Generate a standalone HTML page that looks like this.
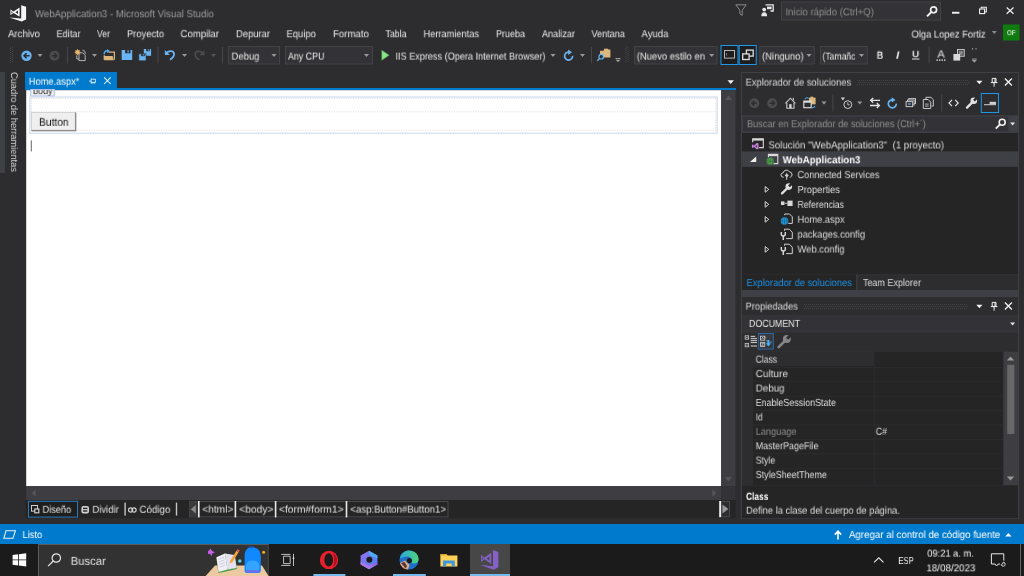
<!DOCTYPE html>
<html><head><meta charset="utf-8"><title>WebApplication3 - Microsoft Visual Studio</title>
<style>
html,body{margin:0;padding:0;background:#2d2d30;}
body{width:1024px;height:576px;overflow:hidden;position:relative;font-family:"Liberation Sans",sans-serif;}
#r{position:absolute;left:0;top:0;width:1024px;height:576px;overflow:hidden;}
#r>div,#r>svg,#r>span{position:absolute;display:block;}
#r>div{box-sizing:content-box;}
.t{white-space:pre;will-change:transform;text-rendering:geometricPrecision;transform-origin:0 50%;}
</style></head><body><div id="r">
<svg width="1024" height="576" viewBox="0 0 1024 576" style="left:0;top:0"><rect x="0" y="0" width="1024" height="576" fill="#2d2d30" /><g transform="translate(9.4 5.2)"><g transform="scale(1 1)" fill="#f6f6f6" fill-rule="evenodd"><path d="M11.8 0L16.7 1.6V14.2L12.2 16.2L0 12.2L11.8 13.4Z"/><path d="M1 4.2L4.2 6.2L10.2 2.2V11.6L4.2 7.7L1 9.8ZM8.6 5.2V8.8L6 7ZM2 5.8V8.2L3.4 7Z"/></g></g></svg>
<span class="t" style="left:35px;top:10px;font-size:10.3px;line-height:10.3px;color:#9a9a9a;transform:translate(0.00px,0.24px) rotate(0.01deg) scaleX(0.9379);">WebApplication3 - Microsoft Visual Studio</span>
<svg width="1024" height="576" viewBox="0 0 1024 576" style="left:0;top:0"><g transform="translate(735 4)"><path d="M0.8 0.8H11.2L7.2 6.2V11.4L4.8 9.8V6.2Z" fill="none" stroke="#8a8a8a" stroke-width="1"/></g><g transform="translate(761 4)"><path d="M4.5 0.8H12.2V7H9.5" fill="none" stroke="#e8e8e8" stroke-width="1.3"/><rect x="6" y="2.6" width="4.6" height="2.6" fill="#e8e8e8"/><circle cx="3.2" cy="5.6" r="1.9" fill="#e8e8e8"/><path d="M0.3 12.2C0.3 9.4 1.4 8.3 3.2 8.3S6.1 9.4 6.1 12.2Z" fill="#e8e8e8"/></g><rect x="781.5" y="2.1" width="159" height="18" fill="#333337" stroke="#434346" stroke-width="1" /></svg>
<span class="t" style="left:785px;top:8px;font-size:10.3px;line-height:10.3px;color:#8c8c8c;transform:translate(0.50px,0.34px) rotate(0.01deg) scaleX(0.9286);">Inicio rápido (Ctrl+Q)</span>
<svg width="1024" height="576" viewBox="0 0 1024 576" style="left:0;top:0"><g transform="translate(926 5.4)"><circle cx="7.6" cy="4.4" r="3" fill="none" stroke="#f1f1f1" stroke-width="1.7"/><path d="M5.4 6.6L1 11" stroke="#f1f1f1" stroke-width="2"/></g><rect x="952" y="11.8" width="7.4" height="1.9" fill="#f1f1f1" /><g transform="translate(979 6.6)"><path d="M2.2 2V0.6H7.3V5.4H5.8" fill="none" stroke="#f1f1f1" stroke-width="1.1"/><rect x="0.6" y="2.4" width="5" height="4.6" fill="none" stroke="#f1f1f1" stroke-width="1.1"/></g><g transform="translate(1006.2 7.2)"><path d="M0.5 0.3L7.3 6.6M7.3 0.3L0.5 6.6" stroke="#f1f1f1" stroke-width="1.2"/></g></svg>
<span class="t" style="left:8px;top:30px;font-size:10.3px;line-height:10.3px;color:#e6e6e6;transform:translate(0.00px,0.24px) rotate(0.01deg) scaleX(0.9317);">Archivo</span>
<span class="t" style="left:56px;top:30px;font-size:10.3px;line-height:10.3px;color:#e6e6e6;transform:translate(0.50px,0.24px) rotate(0.01deg) scaleX(0.8919);">Editar</span>
<span class="t" style="left:97px;top:30px;font-size:10.3px;line-height:10.3px;color:#e6e6e6;transform:translate(0.00px,0.24px) rotate(0.01deg) scaleX(0.8408);">Ver</span>
<span class="t" style="left:127px;top:30px;font-size:10.3px;line-height:10.3px;color:#e6e6e6;transform:translate(0.00px,0.24px) rotate(0.01deg) scaleX(0.9103);">Proyecto</span>
<span class="t" style="left:180px;top:30px;font-size:10.3px;line-height:10.3px;color:#e6e6e6;transform:translate(0.50px,0.24px) rotate(0.01deg) scaleX(0.9342);">Compilar</span>
<span class="t" style="left:236px;top:30px;font-size:10.3px;line-height:10.3px;color:#e6e6e6;transform:translate(0.00px,0.24px) rotate(0.01deg) scaleX(0.9136);">Depurar</span>
<span class="t" style="left:286px;top:30px;font-size:10.3px;line-height:10.3px;color:#e6e6e6;transform:translate(0.50px,0.24px) rotate(0.01deg) scaleX(0.9198);">Equipo</span>
<span class="t" style="left:333px;top:30px;font-size:10.3px;line-height:10.3px;color:#e6e6e6;transform:translate(0.00px,0.24px) rotate(0.01deg) scaleX(0.9387);">Formato</span>
<span class="t" style="left:385px;top:30px;font-size:10.3px;line-height:10.3px;color:#e6e6e6;transform:translate(0.50px,0.24px) rotate(0.01deg) scaleX(0.8528);">Tabla</span>
<span class="t" style="left:423px;top:30px;font-size:10.3px;line-height:10.3px;color:#e6e6e6;transform:translate(0.50px,0.24px) rotate(0.01deg) scaleX(0.8977);">Herramientas</span>
<span class="t" style="left:496px;top:30px;font-size:10.3px;line-height:10.3px;color:#e6e6e6;transform:translate(0.00px,0.24px) rotate(0.01deg) scaleX(0.8731);">Prueba</span>
<span class="t" style="left:542px;top:30px;font-size:10.3px;line-height:10.3px;color:#e6e6e6;transform:translate(0.00px,0.24px) rotate(0.01deg) scaleX(0.8868);">Analizar</span>
<span class="t" style="left:591px;top:30px;font-size:10.3px;line-height:10.3px;color:#e6e6e6;transform:translate(0.50px,0.24px) rotate(0.01deg) scaleX(0.8861);">Ventana</span>
<span class="t" style="left:641px;top:30px;font-size:10.3px;line-height:10.3px;color:#e6e6e6;transform:translate(0.50px,0.24px) rotate(0.01deg) scaleX(0.9304);">Ayuda</span>
<span class="t" style="left:911px;top:30px;font-size:10.3px;line-height:10.3px;color:#e6e6e6;transform:translate(0.50px,0.64px) rotate(0.01deg) scaleX(0.9127);">Olga Lopez Fortiz</span>
<svg width="1024" height="576" viewBox="0 0 1024 576" style="left:0;top:0"><g transform="translate(991.8 31.0)"><path d="M0 0H5L2.5 3Z" fill="#8a8a8a"/></g><rect x="1003" y="24.5" width="16.5" height="16" fill="#107c10" /></svg>
<span class="t" style="left:1007px;top:29px;font-size:7.3px;line-height:7.3px;color:#ffffff;transform:translate(0.00px,0.16px) rotate(0.01deg) scaleX(0.8484);">OF</span>
<svg width="1024" height="576" viewBox="0 0 1024 576" style="left:0;top:0"><g transform="translate(10 46)"><g fill="#46464a"><rect x="0" y="0.0" width="1" height="1"/><rect x="2" y="1.0" width="1" height="1"/><rect x="0" y="2.0" width="1" height="1"/><rect x="2" y="3.0" width="1" height="1"/><rect x="0" y="4.0" width="1" height="1"/><rect x="2" y="5.0" width="1" height="1"/><rect x="0" y="6.0" width="1" height="1"/><rect x="2" y="7.0" width="1" height="1"/><rect x="0" y="8.0" width="1" height="1"/><rect x="2" y="9.0" width="1" height="1"/><rect x="0" y="10.0" width="1" height="1"/><rect x="2" y="11.0" width="1" height="1"/><rect x="0" y="12.0" width="1" height="1"/><rect x="2" y="13.0" width="1" height="1"/><rect x="0" y="14.0" width="1" height="1"/><rect x="2" y="15.0" width="1" height="1"/><rect x="0" y="16.0" width="1" height="1"/></g></g><g transform="translate(21 50.2)"><circle cx="5.5" cy="5.5" r="5.2" fill="#69b4f0"/><path d="M8.6 5.5H3.2M5.6 2.9L3 5.5L5.6 8.1" stroke="#2d2d30" stroke-width="1.5" fill="none"/></g><g transform="translate(37.5 54.0)"><path d="M0 0H5L2.5 3Z" fill="#999"/></g><g transform="translate(49 50.2)"><circle cx="5.5" cy="5.5" r="5" fill="#4b4b4f"/><path d="M3 5.5H7.6M5.4 3.2L7.8 5.5L5.4 7.8" stroke="#2d2d30" stroke-width="1.5" fill="none"/></g><rect x="67" y="47" width="1" height="16.5" fill="#46464a" /><g transform="translate(74 48.4)"><path d="M5 4.4H8.6L11.2 7V12.2H5Z" fill="none" stroke="#b4b4b4" stroke-width="1"/><path d="M8.4 1.8C10.4 2.2 11.4 3.6 11.4 5.6" fill="none" stroke="#8a8a8a" stroke-width="1.3"/><path d="M2.8 7V10.6H5" fill="none" stroke="#b4b4b4" stroke-width="1"/><circle cx="3.6" cy="3.8" r="2.2" fill="#e8b36a"/><path d="M3.6 0.8V6.8M0.6 3.8H6.6M1.5 1.7L5.7 5.9M5.7 1.7L1.5 5.9" stroke="#e8b36a" stroke-width="0.9"/></g><g transform="translate(92.0 54.0)"><path d="M0 0H5L2.5 3Z" fill="#999"/></g><g transform="translate(103 49)"><path d="M5.6 3.2H11.4V10.8" fill="none" stroke="#dcb67a" stroke-width="1.2"/><path d="M0.8 7H9.6L10.8 11.2H1.2Z" fill="#dcb67a"/><path d="M1.2 11V6" stroke="#dcb67a" stroke-width="1"/><path d="M1.2 5.2C1 2.8 2.6 1.6 4.8 1.9" fill="none" stroke="#5aa9ee" stroke-width="1.5"/><path d="M4.2 0L7 2.3L4 4Z" fill="#5aa9ee"/></g><g transform="translate(121.7 50)"><path d="M0 0H10.5V10H0Z" fill="#6cb5f3"/><rect x="3.4" y="0" width="5.4" height="3.3" fill="#2d2d30"/><rect x="5.8" y="0.3" width="1.2" height="2.2" fill="#6cb5f3"/></g><g transform="translate(138.8 49)"><path d="M5 0H12.3V6.8H5Z" fill="#6cb5f3"/><rect x="7.4" y="0" width="3.6" height="2.2" fill="#2d2d30"/><rect x="9" y="0.3" width="0.9" height="1.4" fill="#6cb5f3"/><path d="M0 4.8H7.3V11.8H0Z" fill="#6cb5f3" stroke="#2d2d30" stroke-width="0.7"/><rect x="2.4" y="5" width="3.6" height="2.2" fill="#2d2d30"/><rect x="4" y="5.2" width="0.9" height="1.4" fill="#6cb5f3"/></g><rect x="157.5" y="47" width="1" height="16.5" fill="#46464a" /><g transform="translate(164.3 48.5)"><path d="M2.2 4.4C5 1.6 9.8 2.2 9.8 5.8C9.8 8 8 9.8 5.6 11.2" fill="none" stroke="#69b4f0" stroke-width="1.8"/><path d="M0.6 1.6V6.6H5.6Z" fill="#69b4f0"/></g><g transform="translate(182.0 54.0)"><path d="M0 0H5L2.5 3Z" fill="#999"/></g><g transform="translate(193 48.6)"><path d="M9.8 4.4C7 1.6 2.2 2.2 2.2 5.8C2.2 8 4 9.8 6.4 11.2" fill="none" stroke="#4d4d50" stroke-width="1.6"/><path d="M11.4 1.6V6.6H6.4Z" fill="#4d4d50"/></g><g transform="translate(211.0 54.0)"><path d="M0 0H5L2.5 3Z" fill="#555558"/></g><rect x="222" y="47" width="1" height="16.5" fill="#46464a" /><rect x="228.5" y="46.5" width="51" height="17.5" fill="#333337" stroke="#434346" stroke-width="1" /></svg>
<span class="t" style="left:231px;top:52px;font-size:10.3px;line-height:10.3px;color:#e6e6e6;transform:translate(0.50px,0.64px) rotate(0.01deg) scaleX(0.9225);">Debug</span>
<svg width="1024" height="576" viewBox="0 0 1024 576" style="left:0;top:0"><g transform="translate(271.5 54.0)"><path d="M0 0H5L2.5 3Z" fill="#999"/></g><rect x="285.5" y="46.5" width="87" height="17.5" fill="#333337" stroke="#434346" stroke-width="1" /></svg>
<span class="t" style="left:288px;top:52px;font-size:10.3px;line-height:10.3px;color:#e6e6e6;transform:translate(0.00px,0.64px) rotate(0.01deg) scaleX(0.8617);">Any CPU</span>
<svg width="1024" height="576" viewBox="0 0 1024 576" style="left:0;top:0"><g transform="translate(364.0 54.0)"><path d="M0 0H5L2.5 3Z" fill="#999"/></g><g transform="translate(381.5 50)"><path d="M0.3 0.3L7.6 5.2L0.3 10.2Z" fill="#8ae28a" stroke="#4cae4c" stroke-width="0.5"/></g></svg>
<span class="t" style="left:395px;top:52px;font-size:10.3px;line-height:10.3px;color:#e6e6e6;transform:translate(0.50px,0.64px) rotate(0.01deg) scaleX(0.8853);">IIS Express (Opera Internet Browser)</span>
<svg width="1024" height="576" viewBox="0 0 1024 576" style="left:0;top:0"><g transform="translate(550.5 54.0)"><path d="M0 0H5L2.5 3Z" fill="#999"/></g><g transform="translate(563 49.5)"><path d="M9.6 6.4A4 4 0 1 1 6.2 2.6" fill="none" stroke="#69b4f0" stroke-width="1.7"/><path d="M5.2 0L9 2.8L5.2 5.4Z" fill="#69b4f0"/></g><g transform="translate(580.0 54.0)"><path d="M0 0H5L2.5 3Z" fill="#999"/></g><rect x="591" y="47" width="1" height="16.5" fill="#46464a" /><g transform="translate(597 48.5)"><path d="M3 2.2H6.4L7.4 1H13.4V9H3Z" fill="#dcb67a"/><rect x="7" y="0.2" width="4" height="2" fill="#dcb67a"/><circle cx="4.2" cy="8.2" r="2.3" fill="#2d2d30" stroke="#69b4f0" stroke-width="1.2"/><path d="M2.6 9.8L0.4 12.4" stroke="#69b4f0" stroke-width="1.4"/></g><rect x="615.5" y="58" width="5" height="1" fill="#999" /><g transform="translate(615.5 59.7)"><path d="M0 0H5L2.5 2.6Z" fill="#999"/></g><g transform="translate(625.5 46)"><g fill="#46464a"><rect x="0" y="0" width="1" height="1"/><rect x="2" y="1" width="1" height="1"/><rect x="0" y="2" width="1" height="1"/><rect x="2" y="3" width="1" height="1"/><rect x="0" y="4" width="1" height="1"/><rect x="2" y="5" width="1" height="1"/><rect x="0" y="6" width="1" height="1"/><rect x="2" y="7" width="1" height="1"/><rect x="0" y="8" width="1" height="1"/><rect x="2" y="9" width="1" height="1"/><rect x="0" y="10" width="1" height="1"/><rect x="2" y="11" width="1" height="1"/><rect x="0" y="12" width="1" height="1"/><rect x="2" y="13" width="1" height="1"/><rect x="0" y="14" width="1" height="1"/><rect x="2" y="15" width="1" height="1"/><rect x="0" y="16" width="1" height="1"/></g></g><rect x="634.5" y="46.5" width="82.5" height="17.5" fill="#333337" stroke="#434346" stroke-width="1" /></svg>
<span class="t" style="left:636px;top:52px;font-size:10.3px;line-height:10.3px;color:#e6e6e6;transform:translate(0.80px,0.64px) rotate(0.01deg) scaleX(0.9163);">(Nuevo estilo en</span>
<svg width="1024" height="576" viewBox="0 0 1024 576" style="left:0;top:0"><g transform="translate(709.2 54.0)"><path d="M0 0H5L2.5 3Z" fill="#999"/></g><rect x="721.0" y="45.5" width="17" height="19" fill="#1e1e1f" stroke="#1c97ea" stroke-width="1" /><rect x="739.2" y="45.5" width="17" height="19" fill="#1e1e1f" stroke="#1c97ea" stroke-width="1" /><g transform="translate(724 50)"><rect x="0.5" y="0.5" width="10" height="7.6" fill="none" stroke="#b4b4b4" stroke-width="1"/><path d="M2.6 3V5.6" stroke="#8a8a8a" stroke-width="0.8"/></g><g transform="translate(742 49.5)"><rect x="4.4" y="0.6" width="6.8" height="6" fill="none" stroke="#e0e0e0" stroke-width="1.3"/><rect x="0.7" y="4.4" width="6.4" height="5.6" fill="#1e1e1f" stroke="#e0e0e0" stroke-width="1.3"/></g><rect x="759.8" y="46.5" width="54.40000000000009" height="17.5" fill="#333337" stroke="#434346" stroke-width="1" /></svg>
<span class="t" style="left:762px;top:52px;font-size:10.3px;line-height:10.3px;color:#e6e6e6;transform:translate(0.00px,0.64px) rotate(0.01deg) scaleX(0.9219);">(Ninguno)</span>
<svg width="1024" height="576" viewBox="0 0 1024 576" style="left:0;top:0"><g transform="translate(806.5 54.0)"><path d="M0 0H5L2.5 3Z" fill="#999"/></g><rect x="820.5" y="46.5" width="46.700000000000045" height="17.5" fill="#333337" stroke="#434346" stroke-width="1" /></svg>
<span class="t" style="left:822px;top:52px;font-size:10.3px;line-height:10.3px;color:#e6e6e6;transform:translate(0.50px,0.64px) rotate(0.01deg) scaleX(0.8355);">(Tamañc</span>
<svg width="1024" height="576" viewBox="0 0 1024 576" style="left:0;top:0"><g transform="translate(859.0 54.0)"><path d="M0 0H5L2.5 3Z" fill="#999"/></g></svg>
<span class="t" style="left:876px;top:51px;font-size:10.4px;line-height:10.4px;color:#e0e0e0;transform:translate(0.80px,0.74px) rotate(0.01deg) scaleX(0.8521);font-weight:bold;">B</span>
<span class="t" style="left:896px;top:51px;font-size:10.4px;line-height:10.4px;color:#e0e0e0;transform:translate(0.00px,0.74px) rotate(0.01deg) scaleX(1.1422);font-weight:bold;font-style:italic;">I</span>
<span class="t" style="left:912px;top:50px;font-size:9.2px;line-height:9.2px;color:#e0e0e0;transform:translate(0.20px,0.24px) rotate(0.01deg) scaleX(1.0536);font-weight:bold;">U</span>
<svg width="1024" height="576" viewBox="0 0 1024 576" style="left:0;top:0"><rect x="912" y="58.5" width="7.4" height="1" fill="#e0e0e0" /><rect x="928.5" y="46.5" width="1" height="17" fill="#46464a" /></svg>
<span class="t" style="left:937px;top:50px;font-size:10.4px;line-height:10.4px;color:#e0e0e0;transform:translate(0.40px,0.64px) rotate(0.01deg) scaleX(1.0667);">A</span>
<svg width="1024" height="576" viewBox="0 0 1024 576" style="left:0;top:0"><g transform="translate(936.5 59.4)"><rect x="0" y="0" width="1.4" height="1.4" fill="#e0e0e0"/><rect x="2.5" y="0" width="1.4" height="1.4" fill="#e0e0e0"/><rect x="5" y="0" width="1.4" height="1.4" fill="#e0e0e0"/><rect x="7.5" y="0" width="1.4" height="1.4" fill="#e0e0e0"/></g><g transform="translate(953 49)"><rect x="4.6" y="0.6" width="6.6" height="6.6" fill="#2d2d30" stroke="#c8c8c8" stroke-width="1.1"/><rect x="6" y="2" width="3.8" height="3.8" fill="#8a8a8a"/><rect x="0.4" y="5" width="6.8" height="6.6" fill="#d8d8d8"/></g><rect x="972" y="48" width="1" height="1.6" fill="#999" /><rect x="975.5" y="48" width="1" height="1.6" fill="#999" /><rect x="971.8" y="58.6" width="5" height="1" fill="#999" /><g transform="translate(971.8 60.1)"><path d="M0 0H5L2.5 2.6Z" fill="#999"/></g><rect x="0" y="72" width="5" height="101" fill="#3f3f46" /></svg>
<span class="t" style="left:17.6px;top:72.3px;font-size:9.8px;line-height:9.8px;color:#d0d0d0;transform-origin:0 0;transform:rotate(90deg) scaleX(0.9462);">Cuadro de herramientas</span>
<svg width="1024" height="576" viewBox="0 0 1024 576" style="left:0;top:0"><rect x="25" y="72" width="92" height="17" fill="#007acc" /><rect x="25" y="88" width="711" height="2.2" fill="#007acc" /></svg>
<span class="t" style="left:28px;top:77px;font-size:10.3px;line-height:10.3px;color:#ffffff;transform:translate(0.80px,0.74px) rotate(0.01deg) scaleX(0.9019);">Home.aspx*</span>
<svg width="1024" height="576" viewBox="0 0 1024 576" style="left:0;top:0"><g transform="translate(89 77.8)"><path d="M0 3.3H2.2M2.2 0.8V5.8M2.2 1.4H6.4V4.6H2.2M2.2 5.1H6.4" stroke="#e4f1fb" stroke-width="0.85" fill="none"/></g><g transform="translate(103.6 76.9)"><path d="M0.5 0.5L7.1 7.1M7.1 0.5L0.5 7.1" stroke="#eef6fc" stroke-width="1.05"/></g><g transform="translate(727.5 80.2)"><path d="M0 0H6.4L3.2 3.8Z" fill="#f1f1f1"/></g><rect x="26.2" y="90.2" width="695" height="396" fill="#ffffff" /><rect x="721.2" y="90.2" width="14.3" height="396" fill="#3e3e42" /><g transform="translate(725 95.6)"><path d="M0 4.4L3.5 0L7 4.4Z" fill="#56565a"/></g><g transform="translate(724.8 477)"><path d="M0 0L3.5 4.4L7 0Z" fill="#56565a"/></g><rect x="26.2" y="486.2" width="695" height="13.8" fill="#3e3e42" /><rect x="721.2" y="486.2" width="14.3" height="13.8" fill="#333337" /><g transform="translate(31.6 489.6)"><path d="M4 0L0 3.5L4 7Z" fill="#56565a"/></g><g transform="translate(712.4 489.6)"><path d="M0 0L4 3.5L0 7Z" fill="#56565a"/></g><rect x="30.7" y="89.5" width="23.6" height="6.5" fill="#f0f0f0" stroke="#a9c0ea" stroke-width="1" /></svg>
<div style="left:31px;top:90px;width:23px;height:6px;overflow:hidden;background:transparent"><span class="t" style="position:absolute;left:2.4px;top:-4px;transform-origin:0 0;font-size:9.8px;line-height:9.8px;color:#2a2a2a;transform:translate(0,1.1px) rotate(0.01deg) scaleX(0.92)">body</span></div>
<svg width="1024" height="576" viewBox="0 0 1024 576" style="left:0;top:0"><rect x="29.9" y="97.0" width="687.2" height="36.2" fill="none" stroke="#c8d6ee" stroke-width="1" /><g stroke="#d9d9d9" stroke-width="1" stroke-dasharray="1 1.4" fill="none"><path d="M31.5 98.4H716M31.5 111.8H716M31.5 130.2H716"/><path d="M31.6 98.4V130.2M715.8 98.4V130.2"/></g><rect x="31.5" y="112.5" width="44.8" height="18.8" fill="#737373" /><rect x="31.5" y="112.5" width="43.9" height="17.9" fill="#b9b9b9" /><rect x="31.5" y="112.5" width="43.3" height="17.3" fill="#efefef" /></svg>
<span class="t" style="left:39px;top:117px;font-size:11.2px;line-height:11.2px;color:#111111;transform:translate(0.00px,0.81px) rotate(0.01deg) scaleX(0.9172);">Button</span>
<svg width="1024" height="576" viewBox="0 0 1024 576" style="left:0;top:0"><rect x="30.8" y="140.4" width="0.9" height="11" fill="#555555" /><rect x="25.5" y="500" width="710" height="18.2" fill="#252526" /><rect x="28.5" y="501.3" width="49" height="15.8" fill="#1e1e1e" stroke="#2b78b8" stroke-width="1" /><g transform="translate(31 505)"><rect x="0.5" y="0.5" width="6" height="5.6" fill="none" stroke="#d0d0d0" stroke-width="1"/><rect x="3.2" y="3.4" width="5.2" height="5" fill="#d0d0d0"/><rect x="4.4" y="4.6" width="2.8" height="2.6" fill="#1e1e1e"/></g></svg>
<span class="t" style="left:42px;top:505px;font-size:10.3px;line-height:10.3px;color:#e0e0e0;transform:translate(0.50px,0.84px) rotate(0.01deg) scaleX(0.8982);">Diseño</span>
<svg width="1024" height="576" viewBox="0 0 1024 576" style="left:0;top:0"><g transform="translate(81 505.5)"><rect x="0.4" y="0.4" width="7.6" height="7.6" rx="2" fill="#d0d0d0"/><rect x="2" y="2.2" width="4.4" height="1.4" fill="#252526"/><rect x="2" y="4.8" width="4.4" height="1.4" fill="#252526"/></g></svg>
<span class="t" style="left:92px;top:505px;font-size:10.3px;line-height:10.3px;color:#e0e0e0;transform:translate(0.40px,0.84px) rotate(0.01deg) scaleX(0.9227);">Dividir</span>
<svg width="1024" height="576" viewBox="0 0 1024 576" style="left:0;top:0"><rect x="124.4" y="502.6" width="1.4" height="13" fill="#c4c4c4" /><g transform="translate(128 507)"><circle cx="2.6" cy="3" r="2.1" fill="none" stroke="#d0d0d0" stroke-width="1.2"/><circle cx="6" cy="3" r="2.1" fill="none" stroke="#d0d0d0" stroke-width="1.2"/></g></svg>
<span class="t" style="left:139px;top:505px;font-size:10.3px;line-height:10.3px;color:#e0e0e0;transform:translate(0.50px,0.84px) rotate(0.01deg) scaleX(0.9436);">Código</span>
<svg width="1024" height="576" viewBox="0 0 1024 576" style="left:0;top:0"><rect x="175.8" y="502.6" width="1.4" height="13" fill="#c4c4c4" /><rect x="189.5" y="501.5" width="258.5" height="15.399999999999999" fill="#252526" stroke="#4a4a4e" stroke-width="1" /><rect x="189.6" y="501.6" width="8.4" height="15.2" fill="#3a3a3d" /><g transform="translate(190.8 505)"><path d="M5 0L0 4.2L5 8.4Z" fill="#8a8a8a"/></g><rect x="198" y="501" width="1.6" height="16.4" fill="#e8e8e8" /><rect x="234.6" y="501" width="1.6" height="16.4" fill="#e8e8e8" /><rect x="274.8" y="501" width="1.6" height="16.4" fill="#e8e8e8" /><rect x="345.7" y="501" width="1.6" height="16.4" fill="#e8e8e8" /></svg>
<span class="t" style="left:202px;top:505px;font-size:10.3px;line-height:10.3px;color:#e0e0e0;transform:translate(0.40px,0.64px) rotate(0.01deg) scaleX(0.9813);">&lt;html&gt;</span>
<span class="t" style="left:239px;top:505px;font-size:10.3px;line-height:10.3px;color:#e0e0e0;transform:translate(0.30px,0.64px) rotate(0.01deg) scaleX(0.9952);">&lt;body&gt;</span>
<span class="t" style="left:279px;top:505px;font-size:10.3px;line-height:10.3px;color:#e0e0e0;transform:translate(0.00px,0.64px) rotate(0.01deg) scaleX(0.9971);">&lt;form#form1&gt;</span>
<span class="t" style="left:350px;top:505px;font-size:10.3px;line-height:10.3px;color:#e0e0e0;transform:translate(0.40px,0.64px) rotate(0.01deg) scaleX(0.9326);">&lt;asp:Button#Button1&gt;</span>
<svg width="1024" height="576" viewBox="0 0 1024 576" style="left:0;top:0"><rect x="719.2" y="501" width="1.8" height="16.2" fill="#f0f0f0" /><rect x="721.5" y="501.5" width="8" height="15.2" fill="#2d2d30" stroke="#4a4a4e" stroke-width="1" /><g transform="translate(722.4 504.6)"><path d="M0 0L6 4.5L0 9Z" fill="#9a9a9a"/></g><rect x="741" y="72" width="278" height="219" fill="#3f3f46" /><rect x="742" y="73" width="276" height="19.5" fill="#2d2d30" /></svg>
<span class="t" style="left:745px;top:78px;font-size:10.3px;line-height:10.3px;color:#d8d8d8;transform:translate(0.60px,0.64px) rotate(0.01deg) scaleX(0.9139);">Explorador de soluciones</span>
<svg width="1024" height="576" viewBox="0 0 1024 576" style="left:0;top:0"><g transform="translate(857 80.1)"><g fill="#45454a"><rect x="0" y="0" width="1" height="1"/><rect x="1" y="2" width="1" height="1"/><rect x="0" y="4" width="1" height="1"/><rect x="2" y="0" width="1" height="1"/><rect x="3" y="2" width="1" height="1"/><rect x="2" y="4" width="1" height="1"/><rect x="4" y="0" width="1" height="1"/><rect x="5" y="2" width="1" height="1"/><rect x="4" y="4" width="1" height="1"/><rect x="6" y="0" width="1" height="1"/><rect x="7" y="2" width="1" height="1"/><rect x="6" y="4" width="1" height="1"/><rect x="8" y="0" width="1" height="1"/><rect x="9" y="2" width="1" height="1"/><rect x="8" y="4" width="1" height="1"/><rect x="10" y="0" width="1" height="1"/><rect x="11" y="2" width="1" height="1"/><rect x="10" y="4" width="1" height="1"/><rect x="12" y="0" width="1" height="1"/><rect x="13" y="2" width="1" height="1"/><rect x="12" y="4" width="1" height="1"/><rect x="14" y="0" width="1" height="1"/><rect x="15" y="2" width="1" height="1"/><rect x="14" y="4" width="1" height="1"/><rect x="16" y="0" width="1" height="1"/><rect x="17" y="2" width="1" height="1"/><rect x="16" y="4" width="1" height="1"/><rect x="18" y="0" width="1" height="1"/><rect x="19" y="2" width="1" height="1"/><rect x="18" y="4" width="1" height="1"/><rect x="20" y="0" width="1" height="1"/><rect x="21" y="2" width="1" height="1"/><rect x="20" y="4" width="1" height="1"/><rect x="22" y="0" width="1" height="1"/><rect x="23" y="2" width="1" height="1"/><rect x="22" y="4" width="1" height="1"/><rect x="24" y="0" width="1" height="1"/><rect x="25" y="2" width="1" height="1"/><rect x="24" y="4" width="1" height="1"/><rect x="26" y="0" width="1" height="1"/><rect x="27" y="2" width="1" height="1"/><rect x="26" y="4" width="1" height="1"/><rect x="28" y="0" width="1" height="1"/><rect x="29" y="2" width="1" height="1"/><rect x="28" y="4" width="1" height="1"/><rect x="30" y="0" width="1" height="1"/><rect x="31" y="2" width="1" height="1"/><rect x="30" y="4" width="1" height="1"/><rect x="32" y="0" width="1" height="1"/><rect x="33" y="2" width="1" height="1"/><rect x="32" y="4" width="1" height="1"/><rect x="34" y="0" width="1" height="1"/><rect x="35" y="2" width="1" height="1"/><rect x="34" y="4" width="1" height="1"/><rect x="36" y="0" width="1" height="1"/><rect x="37" y="2" width="1" height="1"/><rect x="36" y="4" width="1" height="1"/><rect x="38" y="0" width="1" height="1"/><rect x="39" y="2" width="1" height="1"/><rect x="38" y="4" width="1" height="1"/><rect x="40" y="0" width="1" height="1"/><rect x="41" y="2" width="1" height="1"/><rect x="40" y="4" width="1" height="1"/><rect x="42" y="0" width="1" height="1"/><rect x="43" y="2" width="1" height="1"/><rect x="42" y="4" width="1" height="1"/><rect x="44" y="0" width="1" height="1"/><rect x="45" y="2" width="1" height="1"/><rect x="44" y="4" width="1" height="1"/><rect x="46" y="0" width="1" height="1"/><rect x="47" y="2" width="1" height="1"/><rect x="46" y="4" width="1" height="1"/><rect x="48" y="0" width="1" height="1"/><rect x="49" y="2" width="1" height="1"/><rect x="48" y="4" width="1" height="1"/><rect x="50" y="0" width="1" height="1"/><rect x="51" y="2" width="1" height="1"/><rect x="50" y="4" width="1" height="1"/><rect x="52" y="0" width="1" height="1"/><rect x="53" y="2" width="1" height="1"/><rect x="52" y="4" width="1" height="1"/><rect x="54" y="0" width="1" height="1"/><rect x="55" y="2" width="1" height="1"/><rect x="54" y="4" width="1" height="1"/><rect x="56" y="0" width="1" height="1"/><rect x="57" y="2" width="1" height="1"/><rect x="56" y="4" width="1" height="1"/><rect x="58" y="0" width="1" height="1"/><rect x="59" y="2" width="1" height="1"/><rect x="58" y="4" width="1" height="1"/><rect x="60" y="0" width="1" height="1"/><rect x="61" y="2" width="1" height="1"/><rect x="60" y="4" width="1" height="1"/><rect x="62" y="0" width="1" height="1"/><rect x="63" y="2" width="1" height="1"/><rect x="62" y="4" width="1" height="1"/><rect x="64" y="0" width="1" height="1"/><rect x="65" y="2" width="1" height="1"/><rect x="64" y="4" width="1" height="1"/><rect x="66" y="0" width="1" height="1"/><rect x="67" y="2" width="1" height="1"/><rect x="66" y="4" width="1" height="1"/><rect x="68" y="0" width="1" height="1"/><rect x="69" y="2" width="1" height="1"/><rect x="68" y="4" width="1" height="1"/><rect x="70" y="0" width="1" height="1"/><rect x="71" y="2" width="1" height="1"/><rect x="70" y="4" width="1" height="1"/><rect x="72" y="0" width="1" height="1"/><rect x="73" y="2" width="1" height="1"/><rect x="72" y="4" width="1" height="1"/><rect x="74" y="0" width="1" height="1"/><rect x="75" y="2" width="1" height="1"/><rect x="74" y="4" width="1" height="1"/><rect x="76" y="0" width="1" height="1"/><rect x="77" y="2" width="1" height="1"/><rect x="76" y="4" width="1" height="1"/><rect x="78" y="0" width="1" height="1"/><rect x="79" y="2" width="1" height="1"/><rect x="78" y="4" width="1" height="1"/><rect x="80" y="0" width="1" height="1"/><rect x="81" y="2" width="1" height="1"/><rect x="80" y="4" width="1" height="1"/><rect x="82" y="0" width="1" height="1"/><rect x="83" y="2" width="1" height="1"/><rect x="82" y="4" width="1" height="1"/><rect x="84" y="0" width="1" height="1"/><rect x="85" y="2" width="1" height="1"/><rect x="84" y="4" width="1" height="1"/><rect x="86" y="0" width="1" height="1"/><rect x="87" y="2" width="1" height="1"/><rect x="86" y="4" width="1" height="1"/><rect x="88" y="0" width="1" height="1"/><rect x="89" y="2" width="1" height="1"/><rect x="88" y="4" width="1" height="1"/><rect x="90" y="0" width="1" height="1"/><rect x="91" y="2" width="1" height="1"/><rect x="90" y="4" width="1" height="1"/><rect x="92" y="0" width="1" height="1"/><rect x="93" y="2" width="1" height="1"/><rect x="92" y="4" width="1" height="1"/><rect x="94" y="0" width="1" height="1"/><rect x="95" y="2" width="1" height="1"/><rect x="94" y="4" width="1" height="1"/><rect x="96" y="0" width="1" height="1"/><rect x="97" y="2" width="1" height="1"/><rect x="96" y="4" width="1" height="1"/><rect x="98" y="0" width="1" height="1"/><rect x="99" y="2" width="1" height="1"/><rect x="98" y="4" width="1" height="1"/><rect x="100" y="0" width="1" height="1"/><rect x="101" y="2" width="1" height="1"/><rect x="100" y="4" width="1" height="1"/><rect x="102" y="0" width="1" height="1"/><rect x="103" y="2" width="1" height="1"/><rect x="102" y="4" width="1" height="1"/><rect x="104" y="0" width="1" height="1"/><rect x="105" y="2" width="1" height="1"/><rect x="104" y="4" width="1" height="1"/><rect x="106" y="0" width="1" height="1"/><rect x="107" y="2" width="1" height="1"/><rect x="106" y="4" width="1" height="1"/><rect x="108" y="0" width="1" height="1"/><rect x="109" y="2" width="1" height="1"/><rect x="108" y="4" width="1" height="1"/><rect x="110" y="0" width="1" height="1"/><rect x="111" y="2" width="1" height="1"/><rect x="110" y="4" width="1" height="1"/></g></g><g transform="translate(976.3 80.8)"><path d="M0 0H6.2L3.1 3.4Z" fill="#f1f1f1"/></g><g transform="translate(990.6 77.8)"><path d="M1.6 0.6H5.4V4.6H1.6ZM0.2 4.8H6.8M3.5 4.8V8.8" stroke="#f1f1f1" stroke-width="1" fill="none"/><path d="M4.4 0.6V4.6" stroke="#f1f1f1" stroke-width="1"/></g><g transform="translate(1004.4 78)"><path d="M0.5 0.5L7.5 7.5M7.5 0.5L0.5 7.5" stroke="#f1f1f1" stroke-width="1.3"/></g><rect x="742" y="92" width="276" height="23.5" fill="#2d2d30" /><g transform="translate(748.7 97.7)"><circle cx="5.5" cy="5.5" r="5" fill="#4b4b4f"/><path d="M8 5.5H3.4M5.6 3.2L3.2 5.5L5.6 7.8" stroke="#2d2d30" stroke-width="1.5" fill="none"/></g><g transform="translate(766.7 97.7)"><circle cx="5.5" cy="5.5" r="5" fill="#4b4b4f"/><path d="M3 5.5H7.6M5.4 3.2L7.8 5.5L5.4 7.8" stroke="#2d2d30" stroke-width="1.5" fill="none"/></g><g transform="translate(784.6 96.8)"><path d="M0.8 6.6L5.8 1.4L10.8 6.6" fill="none" stroke="#c8c8c8" stroke-width="1.1"/><path d="M2.2 6V11.4H9.4V6" fill="none" stroke="#c8c8c8" stroke-width="1.1"/><rect x="4.6" y="7.4" width="2.4" height="4" fill="#d8d8d8"/><rect x="8.2" y="1" width="1.1" height="2.8" fill="#c8c8c8"/></g><g transform="translate(803 96.5)"><rect x="6" y="1.2" width="6.6" height="6.6" fill="#dcb67a"/><rect x="7.4" y="0.2" width="3" height="1.6" fill="#dcb67a"/><rect x="0.8" y="4.6" width="7.4" height="6.6" fill="#2d2d30" stroke="#e4e4e4" stroke-width="1.1"/><rect x="0.8" y="4.6" width="7.4" height="1.6" fill="#e4e4e4"/><path d="M2 2.6C3 1 4.6 1 5.6 2" stroke="#4aa3f0" stroke-width="1.1" fill="none"/><path d="M12 9.6C11 11.4 9.6 11.6 8.8 10.8" stroke="#4aa3f0" stroke-width="1.1" fill="none"/></g><g transform="translate(821.5 101.5)"><path d="M0 0H5L2.5 3Z" fill="#999"/></g><rect x="832.4" y="94.5" width="1" height="17" fill="#46464a" /><g transform="translate(840.6 97)"><path d="M0.2 0.6H4.4L2.3 3.4Z" fill="#d0d0d0"/><circle cx="7.2" cy="7.6" r="3.9" fill="none" stroke="#d0d0d0" stroke-width="1"/><path d="M7.2 5.4V7.8H9" stroke="#d0d0d0" stroke-width="0.9" fill="none"/></g><g transform="translate(857.3 101.5)"><path d="M0 0H5L2.5 3Z" fill="#999"/></g><g transform="translate(869 97.5)"><path d="M11 2.8H1.8M4.2 0.4L1.6 2.8L4.2 5.2" stroke="#e4e4e4" stroke-width="1.3" fill="none"/><path d="M1 8H10.2M7.8 5.6L10.4 8L7.8 10.4" stroke="#e4e4e4" stroke-width="1.3" fill="none"/></g><g transform="translate(886.5 97)"><path d="M9.8 6.6A4 4 0 1 1 6.2 2.8" fill="none" stroke="#69b4f0" stroke-width="1.7"/><path d="M5.2 0.2L9 3L5.2 5.6Z" fill="#69b4f0"/></g><g transform="translate(905.5 98)"><rect x="3.4" y="0.6" width="6.6" height="5" fill="#2d2d30" stroke="#c8c8c8" stroke-width="1"/><rect x="2" y="2" width="6.6" height="5" fill="#2d2d30" stroke="#c8c8c8" stroke-width="1"/><rect x="0.6" y="3.6" width="6.6" height="5" fill="#2d2d30" stroke="#c8c8c8" stroke-width="1"/><rect x="2.4" y="5.4" width="3" height="1.2" fill="#69b4f0"/></g><g transform="translate(922.5 96.5)"><path d="M3.4 3V0.8H8.4L10.8 3.2V9.6H9" fill="none" stroke="#c8c8c8" stroke-width="1"/><path d="M0.8 3H5.6L8.2 5.6V12H0.8Z" fill="none" stroke="#c8c8c8" stroke-width="1"/><path d="M2.6 7.6H6.2M2.6 9.6H6.2" stroke="#c8c8c8" stroke-width="0.9"/></g><rect x="941.2" y="94.5" width="1" height="17" fill="#46464a" /><g transform="translate(948.4 99.5)"><path d="M3.6 0.4L0.6 3.5L3.6 6.6M6.8 0.4L9.8 3.5L6.8 6.6" stroke="#e4e4e4" stroke-width="1.2" fill="none"/></g><g transform="translate(965.6 97)"><g transform="scale(1)"><path d="M1.4 10.6L6.6 5.4" stroke="#e4e4e4" stroke-width="2.3" stroke-linecap="round"/><circle cx="8.2" cy="3.8" r="3.3" fill="#e4e4e4"/><path d="M8.4 3.6L12.4 -0.4" stroke="#2d2d30" stroke-width="2.4"/></g></g><rect x="981.3" y="93.5" width="17.2" height="19" fill="#2d2d30" stroke="#1c97ea" stroke-width="1" /><rect x="984" y="104.2" width="12" height="1" fill="#d0d0d0" /><rect x="989.6" y="101.8" width="6.4" height="2.6" fill="#d0d0d0" /><rect x="742.5" y="116.0" width="275" height="16" fill="#333337" stroke="#3f3f46" stroke-width="1" /><rect x="1008.3" y="116.5" width="9.7" height="15" fill="#3f3f46" /></svg>
<span class="t" style="left:747px;top:120px;font-size:10.3px;line-height:10.3px;color:#8c8c8c;transform:translate(0.00px,0.24px) rotate(0.01deg) scaleX(0.8946);">Buscar en Explorador de soluciones (Ctrl+´)</span>
<svg width="1024" height="576" viewBox="0 0 1024 576" style="left:0;top:0"><g transform="translate(995 118)"><circle cx="7.2" cy="4.2" r="3" fill="none" stroke="#f1f1f1" stroke-width="1.6"/><path d="M5 6.4L0.8 10.6" stroke="#f1f1f1" stroke-width="1.9"/></g><g transform="translate(1010.1 122.5)"><path d="M0 0H5L2.5 3Z" fill="#e4e4e4"/></g><rect x="742" y="133" width="276" height="141.5" fill="#252526" /><rect x="742" y="151.4" width="276" height="15.5" fill="#3f3f46" /><g transform="translate(751.5 138)"><path d="M1.2 4.2V0.8H11.8V9.6H7.6" fill="none" stroke="#d8d8d8" stroke-width="1.1"/><rect x="1.2" y="0.8" width="10.6" height="1.8" fill="#d8d8d8"/><path d="M5.4 4.8L7 5.6V10.8L5.4 11.6L2.6 9L1.2 10L0.4 9.6V6.8L1.2 6.4L2.6 7.4Z M5.3 7L3.8 8.2L5.3 9.4Z" fill="#c27fd8" fill-rule="evenodd"/></g></svg>
<span class="t" style="left:768px;top:141px;font-size:10.3px;line-height:10.3px;color:#dcdcdc;transform:translate(0.50px,0.44px) rotate(0.01deg) scaleX(0.9361);">Solución "WebApplication3"  (1 proyecto)</span>
<svg width="1024" height="576" viewBox="0 0 1024 576" style="left:0;top:0"><g transform="translate(750 156.4)"><path d="M6.2 0V5.6H0Z" fill="#f1f1f1"/></g><g transform="translate(766 153.6)"><path d="M2.4 4V0.8H11.8V10H7" fill="none" stroke="#d8d8d8" stroke-width="1.1"/><rect x="2.4" y="0.8" width="9.4" height="1.8" fill="#d8d8d8"/><circle cx="4.2" cy="7.6" r="3.9" fill="#56a356" stroke="#3f3f46" stroke-width="0.5"/><path d="M0.6 7.6H7.8M4.2 3.9V11.3M2.4 4.6C1.6 6.4 1.6 8.8 2.4 10.6M6 4.6C6.8 6.4 6.8 8.8 6 10.6" stroke="#2c6a2c" stroke-width="0.6" fill="none"/></g></svg>
<span class="t" style="left:782px;top:156px;font-size:10.3px;line-height:10.3px;color:#ffffff;transform:translate(0.70px,0.31px) rotate(0.01deg) scaleX(0.9333);font-weight:bold;">WebApplication3</span>
<svg width="1024" height="576" viewBox="0 0 1024 576" style="left:0;top:0"><g transform="translate(780.5 169)"><path d="M3.2 8.2H2.6A2.2 2.2 0 0 1 2.8 3.8A3.2 3.2 0 0 1 8.8 2.8A2.8 2.8 0 0 1 9.8 8.2H9.2" fill="none" stroke="#d0d0d0" stroke-width="1"/><path d="M6.2 4.2V10.8M4.6 6H7.8L6.2 8Z" stroke="#d0d0d0" stroke-width="1" fill="#d0d0d0"/></g></svg>
<span class="t" style="left:797px;top:171px;font-size:10.3px;line-height:10.3px;color:#dcdcdc;transform:translate(0.50px,0.18px) rotate(0.01deg) scaleX(0.8896);">Connected Services</span>
<svg width="1024" height="576" viewBox="0 0 1024 576" style="left:0;top:0"><g transform="translate(764.6 185.8)"><path d="M0.6 0.8L4.2 3.6L0.6 6.4Z" fill="none" stroke="#d8d8d8" stroke-width="1"/></g><g transform="translate(780.6 182.8)"><g transform="scale(1)"><path d="M1.4 10.6L6.6 5.4" stroke="#e0e0e0" stroke-width="2.3" stroke-linecap="round"/><circle cx="8.2" cy="3.8" r="3.3" fill="#e0e0e0"/><path d="M8.4 3.6L12.4 -0.4" stroke="#252526" stroke-width="2.4"/></g></g></svg>
<span class="t" style="left:797px;top:186px;font-size:10.3px;line-height:10.3px;color:#dcdcdc;transform:translate(0.50px,0.05px) rotate(0.01deg) scaleX(0.9053);">Properties</span>
<svg width="1024" height="576" viewBox="0 0 1024 576" style="left:0;top:0"><g transform="translate(764.6 200.8)"><path d="M0.6 0.8L4.2 3.6L0.6 6.4Z" fill="none" stroke="#d8d8d8" stroke-width="1"/></g><g transform="translate(781 200.6)"><rect x="0" y="0.8" width="3.4" height="3.6" fill="#d8d8d8"/><rect x="3.4" y="2.2" width="3" height="0.9" fill="#d8d8d8"/><rect x="6.4" y="0" width="5.2" height="5.4" fill="#d8d8d8"/></g></svg>
<span class="t" style="left:797px;top:200px;font-size:10.3px;line-height:10.3px;color:#dcdcdc;transform:translate(0.50px,0.92px) rotate(0.01deg) scaleX(0.8460);">Referencias</span>
<svg width="1024" height="576" viewBox="0 0 1024 576" style="left:0;top:0"><g transform="translate(764.6 215.8)"><path d="M0.6 0.8L4.2 3.6L0.6 6.4Z" fill="none" stroke="#d8d8d8" stroke-width="1"/></g><g transform="translate(780.5 213.4)"><path d="M4.2 1.8V0.6H9L11.8 3.4V10H7.8" fill="none" stroke="#d0d0d0" stroke-width="1"/><circle cx="4" cy="7.6" r="3.8" fill="#2d97d3"/><path d="M0.2 7.6H7.8M4 3.8V11.4M2.2 4.6C1.4 6.4 1.4 8.8 2.2 10.6M5.8 4.6C6.6 6.4 6.6 8.8 5.8 10.6" stroke="#0f5e8c" stroke-width="0.6" fill="none"/></g></svg>
<span class="t" style="left:797px;top:215px;font-size:10.3px;line-height:10.3px;color:#dcdcdc;transform:translate(0.50px,0.79px) rotate(0.01deg) scaleX(0.9041);">Home.aspx</span>
<svg width="1024" height="576" viewBox="0 0 1024 576" style="left:0;top:0"><g transform="translate(780.5 228.4)"><path d="M4 2.4V0.8H8.8L11.8 3.8V10.2H5.6" fill="none" stroke="#d0d0d0" stroke-width="1"/><path d="M2.8 11.6V7.4" stroke="#d8d8d8" stroke-width="1.5"/><path d="M0.8 3.6V5.6A2 2 0 0 0 4.8 5.6V3.6" fill="none" stroke="#d8d8d8" stroke-width="1.4"/></g></svg>
<span class="t" style="left:797px;top:230px;font-size:10.3px;line-height:10.3px;color:#dcdcdc;transform:translate(0.50px,0.66px) rotate(0.01deg) scaleX(0.9081);">packages.config</span>
<svg width="1024" height="576" viewBox="0 0 1024 576" style="left:0;top:0"><g transform="translate(764.6 245.8)"><path d="M0.6 0.8L4.2 3.6L0.6 6.4Z" fill="none" stroke="#d8d8d8" stroke-width="1"/></g><g transform="translate(780.5 243.4)"><path d="M4 2.4V0.8H8.8L11.8 3.8V10.2H5.6" fill="none" stroke="#d0d0d0" stroke-width="1"/><path d="M2.8 11.6V7.4" stroke="#d8d8d8" stroke-width="1.5"/><path d="M0.8 3.6V5.6A2 2 0 0 0 4.8 5.6V3.6" fill="none" stroke="#d8d8d8" stroke-width="1.4"/></g></svg>
<span class="t" style="left:797px;top:245px;font-size:10.3px;line-height:10.3px;color:#dcdcdc;transform:translate(0.50px,0.53px) rotate(0.01deg) scaleX(0.9174);">Web.config</span>
<svg width="1024" height="576" viewBox="0 0 1024 576" style="left:0;top:0"><rect x="742" y="274.5" width="114" height="15.5" fill="#252526" /></svg>
<span class="t" style="left:746px;top:279px;font-size:10.3px;line-height:10.3px;color:#1a8fe3;transform:translate(0.50px,0.04px) rotate(0.01deg) scaleX(0.9121);">Explorador de soluciones</span>
<svg width="1024" height="576" viewBox="0 0 1024 576" style="left:0;top:0"><rect x="856.3" y="274.5" width="161.7" height="15.5" fill="#2d2d30" /><rect x="856.3" y="274.5" width="1" height="15.5" fill="#3f3f46" /></svg>
<span class="t" style="left:863px;top:279px;font-size:10.3px;line-height:10.3px;color:#d8d8d8;transform:translate(0.00px,0.04px) rotate(0.01deg) scaleX(0.8734);">Team Explorer</span>
<svg width="1024" height="576" viewBox="0 0 1024 576" style="left:0;top:0"><rect x="741" y="290" width="278" height="7" fill="#3f3f46" /><rect x="741" y="297" width="278" height="222" fill="#3f3f46" /><rect x="742" y="297" width="276" height="18.5" fill="#2d2d30" /></svg>
<span class="t" style="left:745px;top:302px;font-size:10.3px;line-height:10.3px;color:#d8d8d8;transform:translate(0.60px,0.64px) rotate(0.01deg) scaleX(0.9042);">Propiedades</span>
<svg width="1024" height="576" viewBox="0 0 1024 576" style="left:0;top:0"><g transform="translate(804 304.1)"><g fill="#45454a"><rect x="0" y="0" width="1" height="1"/><rect x="1" y="2" width="1" height="1"/><rect x="0" y="4" width="1" height="1"/><rect x="2" y="0" width="1" height="1"/><rect x="3" y="2" width="1" height="1"/><rect x="2" y="4" width="1" height="1"/><rect x="4" y="0" width="1" height="1"/><rect x="5" y="2" width="1" height="1"/><rect x="4" y="4" width="1" height="1"/><rect x="6" y="0" width="1" height="1"/><rect x="7" y="2" width="1" height="1"/><rect x="6" y="4" width="1" height="1"/><rect x="8" y="0" width="1" height="1"/><rect x="9" y="2" width="1" height="1"/><rect x="8" y="4" width="1" height="1"/><rect x="10" y="0" width="1" height="1"/><rect x="11" y="2" width="1" height="1"/><rect x="10" y="4" width="1" height="1"/><rect x="12" y="0" width="1" height="1"/><rect x="13" y="2" width="1" height="1"/><rect x="12" y="4" width="1" height="1"/><rect x="14" y="0" width="1" height="1"/><rect x="15" y="2" width="1" height="1"/><rect x="14" y="4" width="1" height="1"/><rect x="16" y="0" width="1" height="1"/><rect x="17" y="2" width="1" height="1"/><rect x="16" y="4" width="1" height="1"/><rect x="18" y="0" width="1" height="1"/><rect x="19" y="2" width="1" height="1"/><rect x="18" y="4" width="1" height="1"/><rect x="20" y="0" width="1" height="1"/><rect x="21" y="2" width="1" height="1"/><rect x="20" y="4" width="1" height="1"/><rect x="22" y="0" width="1" height="1"/><rect x="23" y="2" width="1" height="1"/><rect x="22" y="4" width="1" height="1"/><rect x="24" y="0" width="1" height="1"/><rect x="25" y="2" width="1" height="1"/><rect x="24" y="4" width="1" height="1"/><rect x="26" y="0" width="1" height="1"/><rect x="27" y="2" width="1" height="1"/><rect x="26" y="4" width="1" height="1"/><rect x="28" y="0" width="1" height="1"/><rect x="29" y="2" width="1" height="1"/><rect x="28" y="4" width="1" height="1"/><rect x="30" y="0" width="1" height="1"/><rect x="31" y="2" width="1" height="1"/><rect x="30" y="4" width="1" height="1"/><rect x="32" y="0" width="1" height="1"/><rect x="33" y="2" width="1" height="1"/><rect x="32" y="4" width="1" height="1"/><rect x="34" y="0" width="1" height="1"/><rect x="35" y="2" width="1" height="1"/><rect x="34" y="4" width="1" height="1"/><rect x="36" y="0" width="1" height="1"/><rect x="37" y="2" width="1" height="1"/><rect x="36" y="4" width="1" height="1"/><rect x="38" y="0" width="1" height="1"/><rect x="39" y="2" width="1" height="1"/><rect x="38" y="4" width="1" height="1"/><rect x="40" y="0" width="1" height="1"/><rect x="41" y="2" width="1" height="1"/><rect x="40" y="4" width="1" height="1"/><rect x="42" y="0" width="1" height="1"/><rect x="43" y="2" width="1" height="1"/><rect x="42" y="4" width="1" height="1"/><rect x="44" y="0" width="1" height="1"/><rect x="45" y="2" width="1" height="1"/><rect x="44" y="4" width="1" height="1"/><rect x="46" y="0" width="1" height="1"/><rect x="47" y="2" width="1" height="1"/><rect x="46" y="4" width="1" height="1"/><rect x="48" y="0" width="1" height="1"/><rect x="49" y="2" width="1" height="1"/><rect x="48" y="4" width="1" height="1"/><rect x="50" y="0" width="1" height="1"/><rect x="51" y="2" width="1" height="1"/><rect x="50" y="4" width="1" height="1"/><rect x="52" y="0" width="1" height="1"/><rect x="53" y="2" width="1" height="1"/><rect x="52" y="4" width="1" height="1"/><rect x="54" y="0" width="1" height="1"/><rect x="55" y="2" width="1" height="1"/><rect x="54" y="4" width="1" height="1"/><rect x="56" y="0" width="1" height="1"/><rect x="57" y="2" width="1" height="1"/><rect x="56" y="4" width="1" height="1"/><rect x="58" y="0" width="1" height="1"/><rect x="59" y="2" width="1" height="1"/><rect x="58" y="4" width="1" height="1"/><rect x="60" y="0" width="1" height="1"/><rect x="61" y="2" width="1" height="1"/><rect x="60" y="4" width="1" height="1"/><rect x="62" y="0" width="1" height="1"/><rect x="63" y="2" width="1" height="1"/><rect x="62" y="4" width="1" height="1"/><rect x="64" y="0" width="1" height="1"/><rect x="65" y="2" width="1" height="1"/><rect x="64" y="4" width="1" height="1"/><rect x="66" y="0" width="1" height="1"/><rect x="67" y="2" width="1" height="1"/><rect x="66" y="4" width="1" height="1"/><rect x="68" y="0" width="1" height="1"/><rect x="69" y="2" width="1" height="1"/><rect x="68" y="4" width="1" height="1"/><rect x="70" y="0" width="1" height="1"/><rect x="71" y="2" width="1" height="1"/><rect x="70" y="4" width="1" height="1"/><rect x="72" y="0" width="1" height="1"/><rect x="73" y="2" width="1" height="1"/><rect x="72" y="4" width="1" height="1"/><rect x="74" y="0" width="1" height="1"/><rect x="75" y="2" width="1" height="1"/><rect x="74" y="4" width="1" height="1"/><rect x="76" y="0" width="1" height="1"/><rect x="77" y="2" width="1" height="1"/><rect x="76" y="4" width="1" height="1"/><rect x="78" y="0" width="1" height="1"/><rect x="79" y="2" width="1" height="1"/><rect x="78" y="4" width="1" height="1"/><rect x="80" y="0" width="1" height="1"/><rect x="81" y="2" width="1" height="1"/><rect x="80" y="4" width="1" height="1"/><rect x="82" y="0" width="1" height="1"/><rect x="83" y="2" width="1" height="1"/><rect x="82" y="4" width="1" height="1"/><rect x="84" y="0" width="1" height="1"/><rect x="85" y="2" width="1" height="1"/><rect x="84" y="4" width="1" height="1"/><rect x="86" y="0" width="1" height="1"/><rect x="87" y="2" width="1" height="1"/><rect x="86" y="4" width="1" height="1"/><rect x="88" y="0" width="1" height="1"/><rect x="89" y="2" width="1" height="1"/><rect x="88" y="4" width="1" height="1"/><rect x="90" y="0" width="1" height="1"/><rect x="91" y="2" width="1" height="1"/><rect x="90" y="4" width="1" height="1"/><rect x="92" y="0" width="1" height="1"/><rect x="93" y="2" width="1" height="1"/><rect x="92" y="4" width="1" height="1"/><rect x="94" y="0" width="1" height="1"/><rect x="95" y="2" width="1" height="1"/><rect x="94" y="4" width="1" height="1"/><rect x="96" y="0" width="1" height="1"/><rect x="97" y="2" width="1" height="1"/><rect x="96" y="4" width="1" height="1"/><rect x="98" y="0" width="1" height="1"/><rect x="99" y="2" width="1" height="1"/><rect x="98" y="4" width="1" height="1"/><rect x="100" y="0" width="1" height="1"/><rect x="101" y="2" width="1" height="1"/><rect x="100" y="4" width="1" height="1"/><rect x="102" y="0" width="1" height="1"/><rect x="103" y="2" width="1" height="1"/><rect x="102" y="4" width="1" height="1"/><rect x="104" y="0" width="1" height="1"/><rect x="105" y="2" width="1" height="1"/><rect x="104" y="4" width="1" height="1"/><rect x="106" y="0" width="1" height="1"/><rect x="107" y="2" width="1" height="1"/><rect x="106" y="4" width="1" height="1"/><rect x="108" y="0" width="1" height="1"/><rect x="109" y="2" width="1" height="1"/><rect x="108" y="4" width="1" height="1"/><rect x="110" y="0" width="1" height="1"/><rect x="111" y="2" width="1" height="1"/><rect x="110" y="4" width="1" height="1"/><rect x="112" y="0" width="1" height="1"/><rect x="113" y="2" width="1" height="1"/><rect x="112" y="4" width="1" height="1"/><rect x="114" y="0" width="1" height="1"/><rect x="115" y="2" width="1" height="1"/><rect x="114" y="4" width="1" height="1"/><rect x="116" y="0" width="1" height="1"/><rect x="117" y="2" width="1" height="1"/><rect x="116" y="4" width="1" height="1"/><rect x="118" y="0" width="1" height="1"/><rect x="119" y="2" width="1" height="1"/><rect x="118" y="4" width="1" height="1"/><rect x="120" y="0" width="1" height="1"/><rect x="121" y="2" width="1" height="1"/><rect x="120" y="4" width="1" height="1"/><rect x="122" y="0" width="1" height="1"/><rect x="123" y="2" width="1" height="1"/><rect x="122" y="4" width="1" height="1"/><rect x="124" y="0" width="1" height="1"/><rect x="125" y="2" width="1" height="1"/><rect x="124" y="4" width="1" height="1"/><rect x="126" y="0" width="1" height="1"/><rect x="127" y="2" width="1" height="1"/><rect x="126" y="4" width="1" height="1"/><rect x="128" y="0" width="1" height="1"/><rect x="129" y="2" width="1" height="1"/><rect x="128" y="4" width="1" height="1"/><rect x="130" y="0" width="1" height="1"/><rect x="131" y="2" width="1" height="1"/><rect x="130" y="4" width="1" height="1"/><rect x="132" y="0" width="1" height="1"/><rect x="133" y="2" width="1" height="1"/><rect x="132" y="4" width="1" height="1"/><rect x="134" y="0" width="1" height="1"/><rect x="135" y="2" width="1" height="1"/><rect x="134" y="4" width="1" height="1"/><rect x="136" y="0" width="1" height="1"/><rect x="137" y="2" width="1" height="1"/><rect x="136" y="4" width="1" height="1"/><rect x="138" y="0" width="1" height="1"/><rect x="139" y="2" width="1" height="1"/><rect x="138" y="4" width="1" height="1"/><rect x="140" y="0" width="1" height="1"/><rect x="141" y="2" width="1" height="1"/><rect x="140" y="4" width="1" height="1"/><rect x="142" y="0" width="1" height="1"/><rect x="143" y="2" width="1" height="1"/><rect x="142" y="4" width="1" height="1"/><rect x="144" y="0" width="1" height="1"/><rect x="145" y="2" width="1" height="1"/><rect x="144" y="4" width="1" height="1"/><rect x="146" y="0" width="1" height="1"/><rect x="147" y="2" width="1" height="1"/><rect x="146" y="4" width="1" height="1"/><rect x="148" y="0" width="1" height="1"/><rect x="149" y="2" width="1" height="1"/><rect x="148" y="4" width="1" height="1"/><rect x="150" y="0" width="1" height="1"/><rect x="151" y="2" width="1" height="1"/><rect x="150" y="4" width="1" height="1"/><rect x="152" y="0" width="1" height="1"/><rect x="153" y="2" width="1" height="1"/><rect x="152" y="4" width="1" height="1"/><rect x="154" y="0" width="1" height="1"/><rect x="155" y="2" width="1" height="1"/><rect x="154" y="4" width="1" height="1"/><rect x="156" y="0" width="1" height="1"/><rect x="157" y="2" width="1" height="1"/><rect x="156" y="4" width="1" height="1"/><rect x="158" y="0" width="1" height="1"/><rect x="159" y="2" width="1" height="1"/><rect x="158" y="4" width="1" height="1"/><rect x="160" y="0" width="1" height="1"/><rect x="161" y="2" width="1" height="1"/><rect x="160" y="4" width="1" height="1"/><rect x="162" y="0" width="1" height="1"/><rect x="163" y="2" width="1" height="1"/><rect x="162" y="4" width="1" height="1"/></g></g><g transform="translate(976.3 304.8)"><path d="M0 0H6.2L3.1 3.4Z" fill="#f1f1f1"/></g><g transform="translate(990.6 301.8)"><path d="M1.6 0.6H5.4V4.6H1.6ZM0.2 4.8H6.8M3.5 4.8V8.8" stroke="#f1f1f1" stroke-width="1" fill="none"/><path d="M4.4 0.6V4.6" stroke="#f1f1f1" stroke-width="1"/></g><g transform="translate(1004.4 302)"><path d="M0.5 0.5L7.5 7.5M7.5 0.5L0.5 7.5" stroke="#f1f1f1" stroke-width="1.3"/></g><rect x="742" y="315.5" width="276" height="16.2" fill="#333337" /></svg>
<span class="t" style="left:749px;top:319px;font-size:10.3px;line-height:10.3px;color:#e4e4e4;transform:translate(0.00px,0.94px) rotate(0.01deg) scaleX(0.8570);">DOCUMENT</span>
<svg width="1024" height="576" viewBox="0 0 1024 576" style="left:0;top:0"><g transform="translate(1010.1 322.5)"><path d="M0 0H5L2.5 3Z" fill="#e4e4e4"/></g><rect x="742" y="332.3" width="276" height="19.5" fill="#2d2d30" /><g transform="translate(744.6 335)"><g fill="none" stroke="#bcbcbc" stroke-width="0.9"><rect x="0.6" y="0.8" width="3.4" height="3.4"/><rect x="0.6" y="8.4" width="3.4" height="3.4"/></g><g fill="#bcbcbc"><rect x="1.4" y="2.1" width="1.8" height="0.8"/><rect x="1.4" y="9.7" width="1.8" height="0.8"/><rect x="6" y="0.8" width="4.6" height="1.2"/><rect x="6" y="2.9" width="6.4" height="1.2"/><rect x="6" y="4.9" width="6.4" height="1.2"/><rect x="6" y="6.9" width="6.4" height="1.2"/><rect x="6" y="10.4" width="6.4" height="1.2"/></g></g><rect x="758.3" y="333.5" width="15" height="15.600000000000001" fill="#38383c" stroke="#2a68a6" stroke-width="1" /><g transform="translate(760 335.4)"><g fill="none" stroke="#c4c4c4" stroke-width="0.9"><rect x="0.5" y="0.8" width="4.2" height="4"/><rect x="0.5" y="7" width="4.2" height="4"/></g><path d="M1.5 3.8L2.6 1.8L3.7 3.8M1.5 8.1H3.7L1.5 10H3.7" stroke="#c4c4c4" stroke-width="0.7" fill="none"/><path d="M5.8 1.2V3M6 5.4H7M11 6V7.6" stroke="#a8a8a8" stroke-width="0.8"/><path d="M8.4 4.6V9" stroke="#3db2ff" stroke-width="2.2"/><path d="M5.8 7.8H11L8.4 11.2Z" fill="#3db2ff"/></g><g transform="translate(777 334.4)"><g transform="scale(1.2)"><path d="M1.4 10.6L6.6 5.4" stroke="#858585" stroke-width="2.3" stroke-linecap="round"/><circle cx="8.2" cy="3.8" r="3.3" fill="#858585"/><path d="M8.4 3.6L12.4 -0.4" stroke="#2d2d30" stroke-width="2.4"/></g></g><rect x="742" y="351.8" width="276" height="133.5" fill="#2d2d30" /><rect x="753" y="366" width="250.4" height="119.3" fill="#252526" /><rect x="874.4" y="351.8" width="129" height="14.4" fill="#252526" /><rect x="1003.4" y="351.8" width="14.6" height="133.5" fill="#3e3e42" /><g transform="translate(1006.8 356.4)"><path d="M0 4L3.7 0L7.4 4Z" fill="#999"/></g><rect x="1007.2" y="364.8" width="7.2" height="69.2" fill="#686868" /><g transform="translate(1006.8 476.4)"><path d="M0 0L3.7 4L7.4 0Z" fill="#999"/></g></svg>
<span class="t" style="left:755px;top:355px;font-size:10.3px;line-height:10.3px;color:#dcdcdc;transform:translate(0.70px,0.74px) rotate(0.01deg) scaleX(0.8348);">Class</span>
<span class="t" style="left:755px;top:370px;font-size:10.3px;line-height:10.3px;color:#dcdcdc;transform:translate(0.70px,0.16px) rotate(0.01deg) scaleX(0.9728);">Culture</span>
<svg width="1024" height="576" viewBox="0 0 1024 576" style="left:0;top:0"><rect x="753" y="366.92" width="250.4" height="0.8" fill="#2d2d30" /></svg>
<span class="t" style="left:755px;top:384px;font-size:10.3px;line-height:10.3px;color:#dcdcdc;transform:translate(0.70px,0.58px) rotate(0.01deg) scaleX(0.9521);">Debug</span>
<svg width="1024" height="576" viewBox="0 0 1024 576" style="left:0;top:0"><rect x="753" y="381.34" width="250.4" height="0.8" fill="#2d2d30" /></svg>
<span class="t" style="left:755px;top:398px;font-size:10.3px;line-height:10.3px;color:#dcdcdc;transform:translate(0.70px,1.00px) rotate(0.01deg) scaleX(0.8656);">EnableSessionState</span>
<svg width="1024" height="576" viewBox="0 0 1024 576" style="left:0;top:0"><rect x="753" y="395.76" width="250.4" height="0.8" fill="#2d2d30" /></svg>
<span class="t" style="left:755px;top:413px;font-size:10.3px;line-height:10.3px;color:#dcdcdc;transform:translate(0.70px,0.42px) rotate(0.01deg) scaleX(0.8265);">Id</span>
<svg width="1024" height="576" viewBox="0 0 1024 576" style="left:0;top:0"><rect x="753" y="410.18" width="250.4" height="0.8" fill="#2d2d30" /></svg>
<span class="t" style="left:755px;top:427px;font-size:10.3px;line-height:10.3px;color:#8a8a8a;transform:translate(0.70px,0.84px) rotate(0.01deg) scaleX(0.8925);">Language</span>
<svg width="1024" height="576" viewBox="0 0 1024 576" style="left:0;top:0"><rect x="753" y="424.59999999999997" width="250.4" height="0.8" fill="#2d2d30" /></svg>
<span class="t" style="left:755px;top:442px;font-size:10.3px;line-height:10.3px;color:#dcdcdc;transform:translate(0.70px,0.26px) rotate(0.01deg) scaleX(0.8706);">MasterPageFile</span>
<svg width="1024" height="576" viewBox="0 0 1024 576" style="left:0;top:0"><rect x="753" y="439.02" width="250.4" height="0.8" fill="#2d2d30" /></svg>
<span class="t" style="left:755px;top:456px;font-size:10.3px;line-height:10.3px;color:#dcdcdc;transform:translate(0.70px,0.68px) rotate(0.01deg) scaleX(0.8516);">Style</span>
<svg width="1024" height="576" viewBox="0 0 1024 576" style="left:0;top:0"><rect x="753" y="453.44" width="250.4" height="0.8" fill="#2d2d30" /></svg>
<span class="t" style="left:755px;top:471px;font-size:10.3px;line-height:10.3px;color:#dcdcdc;transform:translate(0.70px,0.10px) rotate(0.01deg) scaleX(0.8708);">StyleSheetTheme</span>
<svg width="1024" height="576" viewBox="0 0 1024 576" style="left:0;top:0"><rect x="753" y="467.86" width="250.4" height="0.8" fill="#2d2d30" /><rect x="874" y="366" width="0.8" height="119.3" fill="#2d2d30" /></svg>
<span class="t" style="left:875px;top:427px;font-size:10.3px;line-height:10.3px;color:#dcdcdc;transform:translate(0.80px,0.84px) rotate(0.01deg) scaleX(0.8506);">C#</span>
<svg width="1024" height="576" viewBox="0 0 1024 576" style="left:0;top:0"><rect x="742" y="485.3" width="276" height="33" fill="#252526" /><rect x="742" y="485.3" width="276" height="0.8" fill="#2d2d30" /></svg>
<span class="t" style="left:746px;top:492px;font-size:10.3px;line-height:10.3px;color:#ffffff;transform:translate(0.00px,0.84px) rotate(0.01deg) scaleX(0.8150);font-weight:bold;">Class</span>
<span class="t" style="left:746px;top:506px;font-size:10.3px;line-height:10.3px;color:#dcdcdc;transform:translate(0.00px,0.74px) rotate(0.01deg) scaleX(0.9086);">Define la clase del cuerpo de página.</span>
<svg width="1024" height="576" viewBox="0 0 1024 576" style="left:0;top:0"><rect x="0" y="524" width="1024" height="20" fill="#007acc" /><g transform="translate(3 530)"><path d="M3 0.7H12.4L10 8.3H0.8Z" fill="none" stroke="#e8f2fb" stroke-width="1.1"/></g></svg>
<span class="t" style="left:22px;top:531px;font-size:10.3px;line-height:10.3px;color:#ffffff;transform:translate(0.50px,0.04px) rotate(0.01deg) scaleX(0.9054);">Listo</span>
<svg width="1024" height="576" viewBox="0 0 1024 576" style="left:0;top:0"><g transform="translate(834 530)"><path d="M4 9.4V1.6M0.8 4.6L4 1.2L7.2 4.6" stroke="#ffffff" stroke-width="1.6" fill="none"/></g></svg>
<span class="t" style="left:849px;top:530px;font-size:10.3px;line-height:10.3px;color:#ffffff;transform:translate(0.00px,0.94px) rotate(0.01deg) scaleX(0.9443);">Agregar al control de código fuente</span>
<svg width="1024" height="576" viewBox="0 0 1024 576" style="left:0;top:0"><g transform="translate(1005.2 533)"><path d="M0 3.6L3.2 0L6.4 3.6Z" fill="#ffffff"/></g><rect x="0" y="544" width="1024" height="32" fill="#1b1b1b" /><g transform="translate(12.6 553.2)"><path d="M0 1.9L5.6 1.1V6.3H0ZM6.4 1L13.6 0V6.3H6.4ZM0 7.1H5.6V12.3L0 11.5ZM6.4 7.1H13.6V13.4L6.4 12.4Z" fill="#ffffff"/></g><rect x="38" y="544" width="230.6" height="32" fill="#323232" /><rect x="38" y="544" width="230.6" height="1" fill="#5c5c5c" /><rect x="38" y="544" width="1" height="32" fill="#5c5c5c" /><rect x="267.7" y="544" width="0.9" height="32" fill="#4e4e4e" /><g transform="translate(47 552)"><circle cx="9.3" cy="6" r="4.2" fill="none" stroke="#e8e8e8" stroke-width="1.2"/><path d="M6.3 9L1.1 14.2" stroke="#e8e8e8" stroke-width="1.2"/></g></svg>
<span class="t" style="left:70px;top:555px;font-size:11.6px;line-height:11.6px;color:#e0e0e0;transform:translate(0.70px,0.90px) rotate(0.01deg) scaleX(0.9722);">Buscar</span>
<svg width="1024" height="576" viewBox="0 0 1024 576" style="left:0;top:0"><g transform="translate(204 545)"><path d="M11 20.4H58L64.6 31H1.6Z" fill="#ecc9a0"/>
<path d="M4 6.6L6.6 3.6L8 6L11 7.2L8.4 8.6L7.4 11L5.8 8.8L4 9Z" fill="#c65fe6"/>
<path d="M12.4 13.4L21 8.6L31 10.8L33 24L22 26.4L14.4 28Z" fill="#4f9e4a"/>
<path d="M12.4 12.2L21 8.4L23.4 24.6L14.6 27Z" fill="#f0eef6"/><path d="M21 8.4L30.6 10L32.6 23L23.4 24.6Z" fill="#e4e0f0"/>
<path d="M14.5 14.5L20 12.2M14.9 17L20.4 14.8M15.3 19.6L20.8 17.4M15.8 22.2L21.2 20" stroke="#b8b4c8" stroke-width="0.6"/>
<path d="M26.2 15.8L32.4 5.8L34.6 7.2L28.4 17.2L25.6 18.4Z" fill="#f2a13c"/><path d="M32.4 5.8L33.6 4L35.8 5.4L34.6 7.2Z" fill="#e8564a"/>
<circle cx="35.8" cy="16" r="1.7" fill="#5fd0e6"/>
<path d="M44 3C44 1 50 1 50 3" fill="none" stroke="#2247b8" stroke-width="1.2"/>
<path d="M40.6 12C40.6 4 44 2.6 48.4 2.6S56.4 4 56.8 12V25.6C56.8 27.4 55.6 28 54 28H43.4C41.8 28 40.6 27.4 40.6 25.6Z" fill="#1088ff"/>
<path d="M42 22C42 17 44.8 15.4 48.7 15.4S55.4 17 55.4 22V25.4H42Z" fill="#33a4ff"/><path d="M42 25.2H55.4V27.4H42Z" fill="#7a6af0"/>
<circle cx="59.6" cy="7.2" r="1.5" fill="#f2b01e"/></g><g transform="translate(281 553.6)"><path d="M2.6 2.6H9.2V10H2.6Z" fill="none" stroke="#cfcfcf" stroke-width="0.9"/><path d="M0.2 0.8H9.4M0.2 11.8H9.4" stroke="#cfcfcf" stroke-width="0.9"/><path d="M12.5 0.2V12.4" stroke="#cfcfcf" stroke-width="0.9"/><circle cx="12.5" cy="4.6" r="0.9" fill="#e0e0e0"/></g><g transform="translate(319.5 550.4)"><ellipse cx="9.5" cy="9.5" rx="9.2" ry="9.2" fill="#e8202c"/><ellipse cx="9.2" cy="9.5" rx="4.4" ry="6.6" fill="#1b1b1b"/><path d="M13 2.6C16 4 17.4 6.6 17.4 9.5S16 15 13 16.4C14.4 14.6 15 12 15 9.5S14.4 4.4 13 2.6Z" fill="#a80f1c"/></g><rect x="313.4" y="574" width="32" height="2" fill="#76b9ed" /><g transform="translate(360 550.4)"><defs><linearGradient id="m1" x1="0" y1="0" x2="1" y2="1"><stop offset="0" stop-color="#9a6cf0"/><stop offset="1" stop-color="#3a8cf0"/></linearGradient><linearGradient id="m2" x1="0" y1="1" x2="1" y2="0"><stop offset="0" stop-color="#c88cf0"/><stop offset="1" stop-color="#7a58d8"/></linearGradient></defs><path d="M9 0.4L17.4 5V14.2L9 18.8L0.6 14.2V5Z" fill="url(#m1)"/><path d="M9 0.4L17.4 5V8L9 4Z" fill="#4ab0f4"/><path d="M0.6 11L9 15L17.4 11V14.2L9 18.8L0.6 14.2Z" fill="url(#m2)"/><circle cx="9.4" cy="9.4" r="3" fill="#1b1b1b"/></g><g transform="translate(399 550)"><defs><linearGradient id="e1" x1="0" y1="0" x2="1" y2="0"><stop offset="0" stop-color="#2aa8e0"/><stop offset="1" stop-color="#4ed17a"/></linearGradient></defs><circle cx="10" cy="10" r="9.6" fill="#1e6fc8"/><path d="M1 8C2 3 6 0.4 10 0.4C15.6 0.4 19.6 4.4 19.6 9C19.6 12 17.4 13.6 15 13.6C13 13.6 12 12.6 12.4 11.6C13.4 9 11.6 6.4 8.4 6.4C4.6 6.4 2 8.6 1 8Z" fill="url(#e1)"/><circle cx="10.4" cy="10.6" r="2.6" fill="#1b1b1b"/><path d="M1 13L6 10.6L10.6 15L9 19.4C5 19.4 2 17 1 13Z" fill="#d9a78a"/><path d="M2 13L5.6 12L8 16L6.6 18.6Z" fill="#5a3a30"/></g><rect x="393" y="574" width="32.8" height="2" fill="#76b9ed" /><g transform="translate(440 553)"><path d="M0.4 1.2H6.4L7.8 2.6H17.4V13.4H0.4Z" fill="#ffd257"/><path d="M0.4 1.2H6.4L7.8 2.6H0.4Z" fill="#e8a820"/><path d="M3 7.4H14.8V13.4H11.6V10.6H6.2V13.4H3Z" fill="#3b97e0"/></g><rect x="470" y="544" width="40" height="32" fill="#474747" /><g transform="translate(480 550)"><g transform="scale(1.1 1.216)" fill="#8661c5" fill-rule="evenodd"><path d="M11.8 0L16.7 1.6V14.2L12.2 16.2L0 12.2L11.8 13.4Z"/><path d="M1 4.2L4.2 6.2L10.2 2.2V11.6L4.2 7.7L1 9.8ZM8.6 5.2V8.8L6 7ZM2 5.8V8.2L3.4 7Z"/></g></g><rect x="470" y="574" width="40" height="2" fill="#76b9ed" /><g transform="translate(873.5 557)"><path d="M0.6 5.4L5.3 0.8L10 5.4" stroke="#e8e8e8" stroke-width="1.1" fill="none"/></g></svg>
<span class="t" style="left:898px;top:557px;font-size:10.2px;line-height:10.2px;color:#f0f0f0;transform:translate(0.40px,0.04px) rotate(0.01deg) scaleX(0.7496);">ESP</span>
<span class="t" style="left:927px;top:549px;font-size:10px;line-height:10px;color:#f0f0f0;transform:translate(0.30px,0.64px) rotate(0.01deg) scaleX(0.9294);">09:21 a. m.</span>
<span class="t" style="left:926px;top:564px;font-size:10px;line-height:10px;color:#f0f0f0;transform:translate(0.50px,0.34px) rotate(0.01deg) scaleX(0.9770);">18/08/2023</span>
<svg width="1024" height="576" viewBox="0 0 1024 576" style="left:0;top:0"><g transform="translate(990.6 553)"><path d="M9.4 11H7.6L6 13L4.4 11H0.8V0.8H13.2V7.6" fill="none" stroke="#e8e8e8" stroke-width="1"/><path d="M12.6 9.2A2 2 0 1 1 10.6 11.6A2.4 2.4 0 0 0 12.6 9.2Z" fill="none" stroke="#e8e8e8" stroke-width="0.9"/></g><rect x="1020" y="544" width="0.9" height="32" fill="#6e6e6e" /></svg>
</div></body></html>
